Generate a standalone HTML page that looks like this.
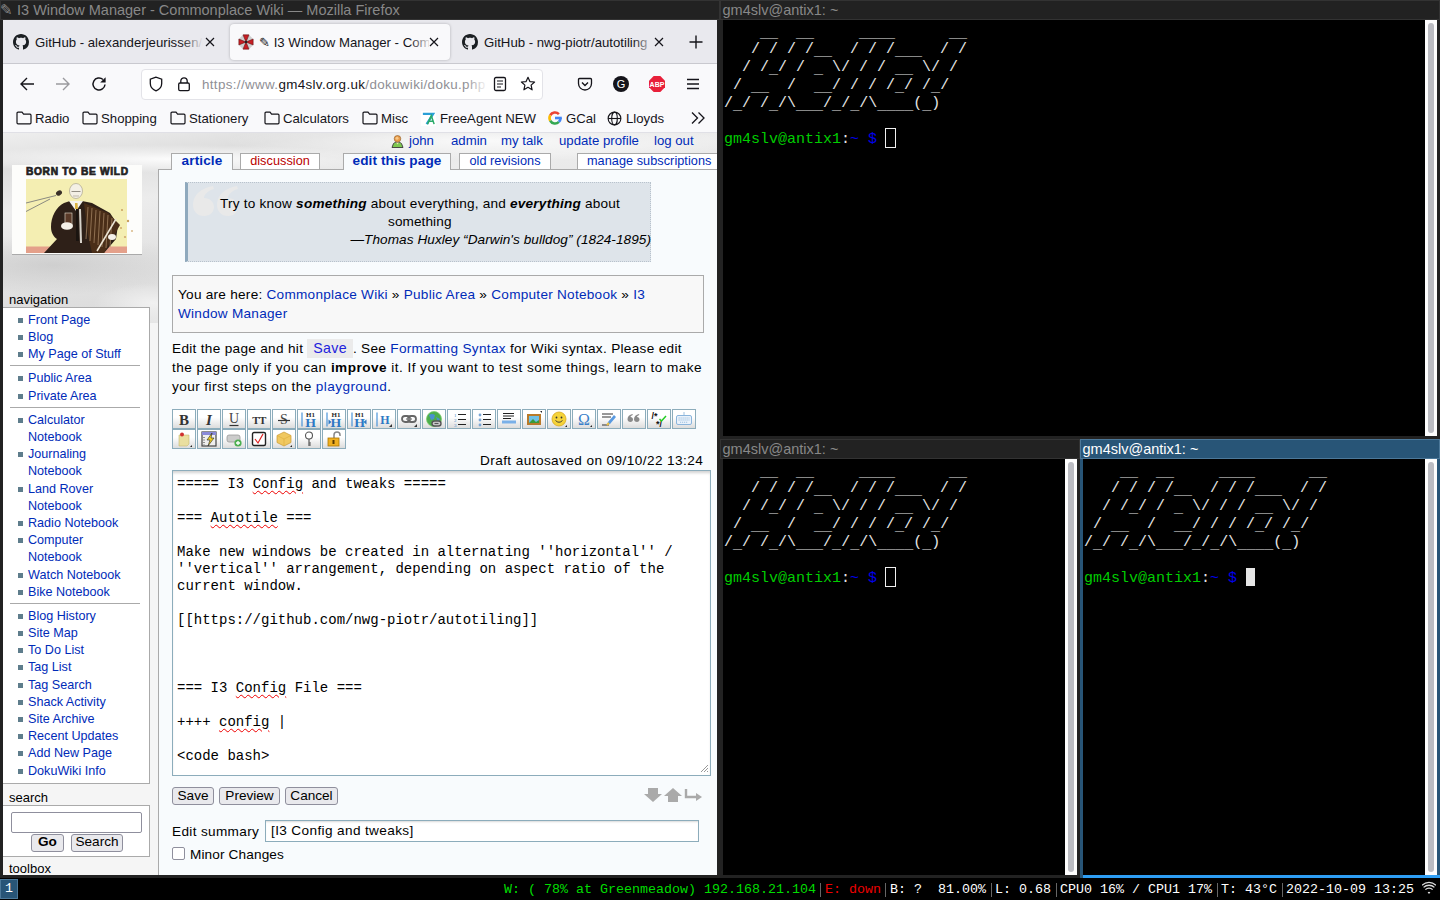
<!DOCTYPE html>
<html><head><meta charset="utf-8">
<style>
*{margin:0;padding:0;box-sizing:border-box}
html,body{width:1440px;height:900px;overflow:hidden;background:#000;position:relative;font-family:"Liberation Sans",sans-serif}
.a{position:absolute}
.mono{font-family:"Liberation Mono",monospace}
.tt{position:absolute;height:20px;background:#222;border:1px solid #333;color:#888;font-size:14.5px;line-height:18px;white-space:nowrap;overflow:hidden;padding-left:0}
.tt.f{background:#285577;border-color:#4c7899;color:#fff}
.term{position:absolute;background:#000;overflow:hidden}
.art{position:absolute;font-family:"Liberation Mono",monospace;font-size:15px;line-height:18px;white-space:pre;color:#e6e6e6}
.art u{text-decoration:none;position:relative;top:2px}
.g{color:#00cd00}.bl{color:#0000ee}.wh{color:#e6e6e6}
.sb{position:absolute;background:#fdfdfd;width:12px}
.sb i{position:absolute;left:3px;width:6px;background:#bbbcc2;border-radius:3px}
.stat{position:absolute;top:879px;height:22px;font-family:"Liberation Mono",monospace;font-size:13.33px;line-height:22px;white-space:pre;color:#fff}
</style></head><body>

<!-- i3 frames -->
<div class="tt" style="left:0;top:0;width:720px;padding-left:0;text-indent:-1px">✎ I3 Window Manager - Commonplace Wiki — Mozilla Firefox</div>
<div class="a" style="left:0;top:20px;width:720px;height:858px;background:#222"></div>
<div class="tt" style="left:720px;top:0;width:720px;padding-left:1.5px">gm4slv@antix1: ~</div>
<div class="a" style="left:720px;top:20px;width:720px;height:419px;background:#222"></div>
<div class="tt" style="left:720px;top:439px;width:360px;padding-left:1.5px">gm4slv@antix1: ~</div>
<div class="a" style="left:720px;top:459px;width:360px;height:419px;background:#222"></div>
<div class="tt f" style="left:1080px;top:439px;width:360px;padding-left:1.5px">gm4slv@antix1: ~</div>
<div class="a" style="left:1080px;top:459px;width:360px;height:419px;background:#285577"></div>
<div class="a" style="left:1083px;top:875px;width:357px;height:3px;background:#2e9ef4"></div>

<!-- terminals -->
<div class="term" style="left:723px;top:20px;width:714px;height:416px">
<div class="art" style="left:1px;top:3px">    <u>__</u>  <u>__</u>     <u>____</u>      <u>__</u>
   / / / /<u>__</u>  / / /<u>___</u>  / /
  / /<u>_</u>/ / <u>_</u> \/ / / <u>__</u> \/ /
 / <u>__</u>  /  <u>__</u>/ / / /<u>_</u>/ /<u>_</u>/
/<u>_</u>/ /<u>_</u>/\<u>___</u>/<u>_</u>/<u>_</u>/\<u>____</u>(<u>_</u>)

<span class="g">gm4slv@antix1</span>:<span class="bl">~ $</span> </div>
<div class="a" style="left:162px;top:108px;width:11px;height:20px;border:1px solid #f0f0f0"></div>
<div class="sb" style="left:702px;top:0;height:416px"><i style="top:3px;bottom:3px"></i></div>
</div>

<div class="term" style="left:723px;top:459px;width:354px;height:416px">
<div class="art" style="left:1px;top:3px">    <u>__</u>  <u>__</u>     <u>____</u>      <u>__</u>
   / / / /<u>__</u>  / / /<u>___</u>  / /
  / /<u>_</u>/ / <u>_</u> \/ / / <u>__</u> \/ /
 / <u>__</u>  /  <u>__</u>/ / / /<u>_</u>/ /<u>_</u>/
/<u>_</u>/ /<u>_</u>/\<u>___</u>/<u>_</u>/<u>_</u>/\<u>____</u>(<u>_</u>)

<span class="g">gm4slv@antix1</span>:<span class="bl">~ $</span> </div>
<div class="a" style="left:162px;top:108px;width:11px;height:20px;border:1px solid #f0f0f0"></div>
<div class="sb" style="left:342px;top:0;height:416px"><i style="top:3px;bottom:3px"></i></div>
</div>

<div class="term" style="left:1083px;top:459px;width:354px;height:416px">
<div class="art" style="left:1px;top:3px">    <u>__</u>  <u>__</u>     <u>____</u>      <u>__</u>
   / / / /<u>__</u>  / / /<u>___</u>  / /
  / /<u>_</u>/ / <u>_</u> \/ / / <u>__</u> \/ /
 / <u>__</u>  /  <u>__</u>/ / / /<u>_</u>/ /<u>_</u>/
/<u>_</u>/ /<u>_</u>/\<u>___</u>/<u>_</u>/<u>_</u>/\<u>____</u>(<u>_</u>)

<span class="g">gm4slv@antix1</span>:<span class="bl">~ $</span> </div>
<div class="a" style="left:163px;top:109px;width:9px;height:18px;background:#e6e6e6"></div>
<div class="sb" style="left:342px;top:0;height:416px"><i style="top:3px;bottom:3px"></i></div>
</div>

<!-- i3bar -->
<div class="a" style="left:0;top:878px;width:1440px;height:22px;background:#000"></div>
<div class="a mono" style="left:0;top:879px;width:18px;height:20px;background:#285577;border:1px solid #4c7899;color:#fff;font-size:13.33px;line-height:18px;text-align:center">1</div>

<!-- STATUS -->
<div class="stat" style="left:504px;color:#00dd00">W: ( 78% at Greenmeadow) 192.168.21.104</div>
<div class="stat" style="left:825px;color:#ee0000">E: down</div>
<div class="stat" style="left:890px">B: ?  81.00%</div>
<div class="stat" style="left:995px">L: 0.68</div>
<div class="stat" style="left:1060px">CPU0 16% / CPU1 17%</div>
<div class="stat" style="left:1221px">T: 43°C</div>
<div class="stat" style="left:1286px">2022-10-09 13:25</div>
<div class="a" style="left:820px;top:883px;width:1px;height:14px;background:#666"></div>
<div class="a" style="left:885px;top:883px;width:1px;height:14px;background:#666"></div>
<div class="a" style="left:991px;top:883px;width:1px;height:14px;background:#666"></div>
<div class="a" style="left:1056px;top:883px;width:1px;height:14px;background:#666"></div>
<div class="a" style="left:1217px;top:883px;width:1px;height:14px;background:#666"></div>
<div class="a" style="left:1282px;top:883px;width:1px;height:14px;background:#666"></div>
<svg class="a" style="left:1422px;top:881px" width="14" height="14" viewBox="0 0 14 14"><path d="M7 13L5.6 11.3A2.2 2.2 0 0 1 8.4 11.3Z" fill="#ddd"/><path d="M3.4 8.6A5 5 0 0 1 10.6 8.6M1.6 6.4A7.8 7.8 0 0 1 12.4 6.4M0 4.3A10 10 0 0 1 14 4.3" stroke="#ddd" stroke-width="1.3" fill="none"/></svg>
<!-- /STATUS -->
<!-- FIREFOX -->
<div id="ff" class="a" style="left:0;top:0;width:717px;height:875px;clip-path:inset(20px 0 0 3px)">
<!-- tabstrip -->
<div class="a" style="left:3px;top:20px;width:714px;height:43px;background:#e9e9ee"></div>
<div class="a" style="left:3px;top:63px;width:714px;height:1px;background:#c9c9cf"></div>
<div class="a" style="left:3px;top:64px;width:714px;height:69px;background:#f9f9fb"></div>
<div class="a" style="left:3px;top:132px;width:714px;height:1px;background:#e0e0e6"></div>
<style>
.tab{position:absolute;top:25px;height:36px;font-size:13.2px;line-height:36px;color:#15141a;white-space:nowrap}
.tabtxt{position:absolute;top:0;overflow:hidden;height:36px}
.fade{position:absolute;top:0;width:22px;height:36px}
.x{position:absolute;top:12px;width:12px;height:12px}
.bm{position:absolute;top:108px;height:22px;font-size:13.2px;line-height:22px;color:#15141a;white-space:nowrap}
.ico{position:absolute}
</style>
<!-- tab 1 -->
<svg class="ico" style="left:13px;top:34px" width="16" height="16" viewBox="0 0 16 16"><path fill="#1b1f23" d="M8 0C3.58 0 0 3.58 0 8c0 3.54 2.29 6.53 5.47 7.59.4.07.55-.17.55-.38 0-.19-.01-.82-.01-1.49-2.01.37-2.53-.49-2.69-.94-.09-.23-.48-.94-.82-1.13-.28-.15-.68-.52-.01-.53.63-.01 1.080.58 1.23.82.72 1.21 1.87.87 2.33.66.07-.52.28-.87.51-1.07-1.780-.2-3.64-.89-3.64-3.95 0-.87.31-1.59.82-2.15-.08-.2-.36-1.02.08-2.12 0 0 .67-.21 2.2.82.64-.18 1.32-.27 2-.27.68 0 1.36.09 2 .27 1.53-1.04 2.2-.82 2.2-.82.44 1.1.16 1.92.08 2.12.51.56.82 1.27.82 2.15 0 3.07-1.87 3.75-3.65 3.95.29.25.54.73.54 1.48 0 1.07-.01 1.93-.01 2.2 0 .21.15.46.55.38A8.013 8.013 0 0016 8c0-4.42-3.58-8-8-8z"/></svg>
<div class="tab" style="left:35px;width:168px;overflow:hidden">GitHub - alexanderjeurissen/dotfiles</div>
<div class="fade" style="left:181px;top:24px;background:linear-gradient(90deg,rgba(233,233,238,0),#e9e9ee)"></div>
<svg class="x" style="left:204px;top:36px" viewBox="0 0 12 12"><path d="M2 2L10 10M10 2L2 10" stroke="#15141a" stroke-width="1.2"/></svg>
<!-- tab 2 active -->
<div class="a" style="left:230px;top:24px;width:220px;height:36px;background:#f9f9fb;border-radius:4px;box-shadow:0 0 3px rgba(0,0,0,.25)"></div>
<svg class="ico" style="left:238px;top:34px" width="16" height="16" viewBox="-8.5 -8.5 17 17"><path d="M0 0L-7.58 -3.14L-3.14 -7.58Z" fill="#cfcfcf"/><path d="M0 0L-3.14 7.58L-7.58 3.14Z" fill="#cfcfcf"/><path d="M0 0L7.58 3.14L3.14 7.58Z" fill="#cfcfcf"/><path d="M0 0L3.14 -7.58L7.58 -3.14Z" fill="#cfcfcf"/><path d="M0 0L-3.14 -7.58L3.14 -7.58Z" fill="#c81e24" stroke="#5a0a0a" stroke-width="0.6" stroke-linejoin="round"/><path d="M0 0L7.58 -3.14L7.58 3.14Z" fill="#c81e24" stroke="#5a0a0a" stroke-width="0.6" stroke-linejoin="round"/><path d="M0 0L3.14 7.58L-3.14 7.58Z" fill="#c81e24" stroke="#5a0a0a" stroke-width="0.6" stroke-linejoin="round"/><path d="M0 0L-7.58 3.14L-7.58 -3.14Z" fill="#c81e24" stroke="#5a0a0a" stroke-width="0.6" stroke-linejoin="round"/><circle r="1.4" fill="#222"/></svg>
<div class="tab" style="left:259px;width:170px;overflow:hidden;color:#15141a">✎ I3 Window Manager - Commonplace</div>
<div class="fade" style="left:410px;top:24px;background:linear-gradient(90deg,rgba(249,249,251,0),#f9f9fb)"></div>
<svg class="x" style="left:428px;top:36px" viewBox="0 0 12 12"><path d="M2 2L10 10M10 2L2 10" stroke="#15141a" stroke-width="1.2"/></svg>
<!-- tab 3 -->
<svg class="ico" style="left:462px;top:34px" width="16" height="16" viewBox="0 0 16 16"><path fill="#1b1f23" d="M8 0C3.58 0 0 3.58 0 8c0 3.54 2.29 6.53 5.47 7.59.4.07.55-.17.55-.38 0-.19-.01-.82-.01-1.49-2.01.37-2.53-.49-2.69-.94-.09-.23-.48-.94-.82-1.13-.28-.15-.68-.52-.01-.53.63-.01 1.08.58 1.23.82.72 1.21 1.87.87 2.330.66.07-.52.28-.87.51-1.07-1.78-.2-3.64-.89-3.64-3.95 0-.87.31-1.59.82-2.15-.08-.2-.36-1.02.08-2.12 0 0 .67-.21 2.2.82.64-.18 1.32-.27 2-.27.68 0 1.36.09 2 .27 1.53-1.04 2.2-.82 2.2-.82.44 1.1.16 1.92.08 2.12.51.56.82 1.27.82 2.15 0 3.07-1.87 3.75-3.65 3.95.29.25.54.73.54 1.48 0 1.07-.01 1.93-.01 2.2 0 .21.15.46.55.38A8.013 8.013 0 0016 8c0-4.42-3.58-8-8-8z"/></svg>
<div class="tab" style="left:484px;width:170px;overflow:hidden">GitHub - nwg-piotr/autotiling</div>
<div class="fade" style="left:633px;top:24px;background:linear-gradient(90deg,rgba(233,233,238,0),#e9e9ee)"></div>
<svg class="x" style="left:653px;top:36px" viewBox="0 0 12 12"><path d="M2 2L10 10M10 2L2 10" stroke="#15141a" stroke-width="1.2"/></svg>
<svg class="ico" style="left:688px;top:34px" width="16" height="16" viewBox="0 0 16 16"><path d="M8 1.5V14.5M1.5 8H14.5" stroke="#15141a" stroke-width="1.4"/></svg>

<!-- nav bar -->
<svg class="ico" style="left:19px;top:76px" width="16" height="16" viewBox="0 0 16 16"><path d="M15 8H2M8 2L2 8L8 14" stroke="#15141a" stroke-width="1.4" fill="none"/></svg>
<svg class="ico" style="left:55px;top:76px" width="16" height="16" viewBox="0 0 16 16"><path d="M1 8H14M8 2L14 8L8 14" stroke="#9a9a9e" stroke-width="1.4" fill="none"/></svg>
<svg class="ico" style="left:91px;top:76px" width="16" height="16" viewBox="0 0 16 16"><path d="M14 8.5A6 6 0 1 1 12 3.5" stroke="#15141a" stroke-width="1.5" fill="none"/><path d="M14.6 1.2V6.6H9.2Z" fill="#15141a"/></svg>
<div class="a" style="left:141px;top:69px;width:402px;height:31px;background:#fff;border:1px solid #e3e3e8;border-radius:4px"></div>
<svg class="ico" style="left:148px;top:76px" width="16" height="16" viewBox="0 0 16 16"><path d="M8 1.2L2.3 3.2V7.5C2.3 11 4.8 13.6 8 14.8C11.2 13.6 13.7 11 13.7 7.5V3.2Z" stroke="#15141a" stroke-width="1.3" fill="none"/></svg>
<svg class="ico" style="left:176px;top:76px" width="16" height="16" viewBox="0 0 16 16"><rect x="2.7" y="7" width="10.6" height="7.6" rx="1.3" stroke="#15141a" stroke-width="1.3" fill="none"/><path d="M4.8 7V5A3.2 3.2 0 0 1 11.2 5V7" stroke="#15141a" stroke-width="1.3" fill="none"/></svg>
<div class="a" style="left:202px;top:69px;width:284px;height:31px;font-size:13.4px;line-height:31px;color:#8f8f95;white-space:nowrap;overflow:hidden;letter-spacing:0.35px">https://www.<span style="color:#15141a">gm4slv.org.uk</span>/dokuwiki/doku.php?id=</div>
<div class="fade" style="left:466px;top:70px;height:29px;background:linear-gradient(90deg,rgba(255,255,255,0),#fff)"></div>
<svg class="ico" style="left:492px;top:76px" width="16" height="16" viewBox="0 0 16 16"><rect x="2.5" y="1.5" width="11" height="13" rx="1.5" stroke="#15141a" stroke-width="1.3" fill="none"/><path d="M5 5H11M5 8H11M5 11H9" stroke="#15141a" stroke-width="1.2"/></svg>
<svg class="ico" style="left:520px;top:76px" width="16" height="16" viewBox="0 0 16 16"><path d="M8 1.3L9.9 5.6L14.6 6L11.1 9.1L12.1 13.8L8 11.3L3.9 13.8L4.9 9.1L1.4 6L6.1 5.6Z" stroke="#15141a" stroke-width="1.2" fill="none" stroke-linejoin="round"/></svg>
<svg class="ico" style="left:577px;top:76px" width="16" height="16" viewBox="0 0 16 16"><path d="M2.5 2.5H13.5A1 1 0 0 1 14.5 3.5V7.5A6.5 6.5 0 0 1 1.5 7.5V3.5A1 1 0 0 1 2.5 2.5Z" stroke="#15141a" stroke-width="1.3" fill="none"/><path d="M5 6.5L8 9.5L11 6.5" stroke="#15141a" stroke-width="1.4" fill="none"/></svg>
<svg class="ico" style="left:613px;top:76px" width="16" height="16" viewBox="0 0 16 16"><circle cx="8" cy="8" r="8" fill="#15141a"/><text x="8" y="12.2" text-anchor="middle" font-family="Liberation Sans" font-size="11" fill="#fff">G</text></svg>
<svg class="ico" style="left:649px;top:76px" width="16" height="16" viewBox="0 0 16 16"><path d="M4.7 0H11.3L16 4.7V11.3L11.3 16H4.7L0 11.3V4.7Z" fill="#e8203a"/><text x="8" y="11" text-anchor="middle" font-family="Liberation Sans" font-weight="bold" font-size="7" fill="#fff">ABP</text></svg>
<svg class="ico" style="left:685px;top:76px" width="16" height="16" viewBox="0 0 16 16"><path d="M2 3.5H14M2 8H14M2 12.5H14" stroke="#15141a" stroke-width="1.4"/></svg>

<!-- bookmarks -->
<svg class="ico" style="left:16px;top:110px" width="16" height="16" viewBox="0 0 16 16"><path d="M1 3.2A1 1 0 0 1 2 2.2H6L7.6 4.2H14A1 1 0 0 1 15 5.2V12.8A1 1 0 0 1 14 13.8H2A1 1 0 0 1 1 12.8Z" stroke="#15141a" stroke-width="1.2" fill="none"/></svg>
<div class="bm" style="left:35px">Radio</div>
<svg class="ico" style="left:82px;top:110px" width="16" height="16" viewBox="0 0 16 16"><path d="M1 3.2A1 1 0 0 1 2 2.2H6L7.6 4.2H14A1 1 0 0 1 15 5.2V12.8A1 1 0 0 1 14 13.8H2A1 1 0 0 1 1 12.8Z" stroke="#15141a" stroke-width="1.2" fill="none"/></svg>
<div class="bm" style="left:101px">Shopping</div>
<svg class="ico" style="left:170px;top:110px" width="16" height="16" viewBox="0 0 16 16"><path d="M1 3.2A1 1 0 0 1 2 2.2H6L7.6 4.2H14A1 1 0 0 1 15 5.2V12.8A1 1 0 0 1 14 13.8H2A1 1 0 0 1 1 12.8Z" stroke="#15141a" stroke-width="1.2" fill="none"/></svg>
<div class="bm" style="left:189px">Stationery</div>
<svg class="ico" style="left:264px;top:110px" width="16" height="16" viewBox="0 0 16 16"><path d="M1 3.2A1 1 0 0 1 2 2.2H6L7.6 4.2H14A1 1 0 0 1 15 5.2V12.8A1 1 0 0 1 14 13.8H2A1 1 0 0 1 1 12.8Z" stroke="#15141a" stroke-width="1.2" fill="none"/></svg>
<div class="bm" style="left:283px">Calculators</div>
<svg class="ico" style="left:362px;top:110px" width="16" height="16" viewBox="0 0 16 16"><path d="M1 3.2A1 1 0 0 1 2 2.2H6L7.6 4.2H14A1 1 0 0 1 15 5.2V12.8A1 1 0 0 1 14 13.8H2A1 1 0 0 1 1 12.8Z" stroke="#15141a" stroke-width="1.2" fill="none"/></svg>
<div class="bm" style="left:381px">Misc</div>
<svg class="ico" style="left:421px;top:111px" width="15" height="15" viewBox="0 0 16 16"><rect width="16" height="16" fill="#fff"/><path d="M2 3L13 3L6 14" stroke="#2a9fd6" stroke-width="2.4" fill="none"/><path d="M7 14L11 5L14 14M8.5 11H12.5" stroke="#2aaa6a" stroke-width="1.6" fill="none"/></svg>
<div class="bm" style="left:440px">FreeAgent NEW</div>
<svg class="ico" style="left:547px;top:110px" width="16" height="16" viewBox="0 0 16 16"><path d="M3.24 5.25A5.5 5.5 0 0 1 11.89 4.11" stroke="#ea4335" stroke-width="2.6" fill="none"/><path d="M3.24 10.75A5.5 5.5 0 0 1 3.24 5.25" stroke="#fbbc05" stroke-width="2.6" fill="none"/><path d="M11.89 11.89A5.5 5.5 0 0 1 3.24 10.75" stroke="#34a853" stroke-width="2.6" fill="none"/><path d="M13.5 8A5.5 5.5 0 0 1 11.89 11.89" stroke="#4285f4" stroke-width="2.6" fill="none"/><rect x="8" y="6.7" width="6.8" height="2.6" fill="#4285f4"/></svg>
<div class="bm" style="left:566px">GCal</div>
<svg class="ico" style="left:607px;top:111px" width="15" height="15" viewBox="0 0 16 16"><circle cx="8" cy="8" r="6.8" stroke="#15141a" stroke-width="1.2" fill="none"/><ellipse cx="8" cy="8" rx="3" ry="6.8" stroke="#15141a" stroke-width="1.2" fill="none"/><path d="M1.2 8H14.8" stroke="#15141a" stroke-width="1.2"/></svg>
<div class="bm" style="left:626px">Lloyds</div>
<svg class="ico" style="left:690px;top:111px" width="16" height="14" viewBox="0 0 16 14"><path d="M2 1.5L7.5 7L2 12.5M8.5 1.5L14 7L8.5 12.5" stroke="#15141a" stroke-width="1.3" fill="none"/></svg>

<!-- WIKI -->
<style>
.wk{position:absolute;font-size:13.6px;white-space:nowrap;color:#000;letter-spacing:0.23px}
.lk{color:#002bb8}
.nav{position:absolute;left:28px;font-size:12.6px;line-height:17px;color:#002bb8;white-space:nowrap}
.bul{position:absolute;left:18px;width:5px;height:5px;background:#5e7d8c}
.sep{position:absolute;left:10px;width:130px;height:1px;background:#aaa}
.tb{position:absolute;width:24px;height:20px;border:1px solid #8cacbb;background:linear-gradient(#fff,#fff 40%,#dcdcdc)}
.btn{position:absolute;height:18px;border:1px solid #8f8f9d;border-radius:3px;background:#e9e9ed;font-size:13.6px;line-height:16px;text-align:center;color:#000}
.code{position:absolute;left:177px;top:476px;font-family:"Liberation Mono",monospace;font-size:14px;line-height:17px;white-space:pre;color:#000}
.sq{text-decoration:underline wavy #e00;text-decoration-thickness:1px;text-underline-offset:2px}
</style>
<div class="a" style="left:3px;top:133px;width:714px;height:742px;background:#f5f5f5"></div>
<div class="a" style="left:3px;top:133px;width:714px;height:190px;background:radial-gradient(ellipse 230px 14px at 170px 26px,rgba(255,255,255,.9),rgba(255,255,255,0)),radial-gradient(ellipse 150px 30px at 50px 132px,rgba(190,190,190,.55),rgba(190,190,190,0)),radial-gradient(ellipse 260px 20px at 480px 8px,rgba(255,255,255,.8),rgba(255,255,255,0)),radial-gradient(ellipse 60px 20px at 150px 170px,rgba(255,255,255,.6),rgba(255,255,255,0)),linear-gradient(174deg,#eeeeee 0%,#dedede 14%,#ececec 30%,#e4e4e4 50%,#dddddd 70%,#f0f0f0 86%,#f5f5f5 100%)"></div>
<svg class="a" style="left:391px;top:134px" width="13" height="14" viewBox="0 0 13 14"><path d="M1 13.5L2.5 9.5C3.5 8.5 5 8.2 6.5 8.2C8 8.2 9.5 8.5 10.5 9.5L12 13.5Z" fill="#7ec850" stroke="#3a3a3a" stroke-width="0.9"/><path d="M5.2 8.4L6.5 10.5L7.8 8.4Z" fill="#f0e0c0"/><circle cx="6.5" cy="4.8" r="3.3" fill="#e89a48" stroke="#8a5a2a" stroke-width="0.6"/><circle cx="6" cy="4.2" r="1.5" fill="#f8c888"/></svg>
<div class="wk lk" style="left:409px;top:132px;line-height:18px;letter-spacing:0;font-size:13.2px">john</div>
<div class="wk lk" style="left:451px;top:132px;line-height:18px;letter-spacing:0;font-size:13.2px">admin</div>
<div class="wk lk" style="left:501px;top:132px;line-height:18px;letter-spacing:0;font-size:13.2px">my talk</div>
<div class="wk lk" style="left:559px;top:132px;line-height:18px;letter-spacing:0;font-size:13.2px">update profile</div>
<div class="wk lk" style="left:654px;top:132px;line-height:18px;letter-spacing:0;font-size:13.2px">log out</div>
<div class="a" style="left:158px;top:169px;width:600px;height:720px;background:#f8fbfd;border:1px solid #aaa"></div>
<div class="a" style="left:171px;top:153px;width:62px;height:17px;background:#f8fbfd;border:1px solid #aaa;border-bottom:none;font-size:13.6px;letter-spacing:0.1px;line-height:13px;text-align:center;color:#002bb8;font-weight:bold;white-space:nowrap">article</div>
<div class="a" style="left:240px;top:153px;width:80px;height:17px;background:#fff;border:1px solid #aaa;border-bottom:1px solid #aaa;font-size:12.7px;letter-spacing:0.05px;line-height:15px;text-align:center;color:#ba0000;font-weight:normal;white-space:nowrap">discussion</div>
<div class="a" style="left:343px;top:153px;width:108px;height:17px;background:#f8fbfd;border:1px solid #aaa;border-bottom:none;font-size:13.6px;letter-spacing:0.1px;line-height:13px;text-align:center;color:#002bb8;font-weight:bold;white-space:nowrap">edit this page</div>
<div class="a" style="left:459px;top:153px;width:92px;height:17px;background:#fff;border:1px solid #aaa;border-bottom:1px solid #aaa;font-size:12.7px;letter-spacing:0.05px;line-height:15px;text-align:center;color:#002bb8;font-weight:normal;white-space:nowrap">old revisions</div>
<div class="a" style="left:577px;top:153px;width:147px;height:17px;background:#fff;border:1px solid #aaa;border-bottom:1px solid #aaa;font-size:12.7px;letter-spacing:0.05px;line-height:15px;text-align:left;padding-left:9px;color:#002bb8;font-weight:normal;white-space:nowrap">manage subscriptions</div>
<div class="a" style="left:185px;top:182px;width:466px;height:80px;background:#dee4ea;border:1px dotted #b8c2cc;border-left:3px solid #8fa9bd"></div>
<svg class="a" style="left:193px;top:186px" width="46" height="30" viewBox="0 0 46 30"><path d="M11 30C4 30 0 25 0 19C0 9 8 2 20 0L21 3C14 5 11 9 11 12C17 12 21 16 21 21C21 26 17 30 11 30Z M35 30C28 30 24 25 24 19C24 9 32 2 44 0L45 3C38 5 35 9 35 12C41 12 45 16 45 21C45 26 41 30 35 30Z" fill="#e9e9e9"/></svg>
<div class="wk" style="left:220px;top:195px;line-height:18px;letter-spacing:0.215px">Try to know <b><i>something</i></b> about everything, and <b><i>everything</i></b> about</div>
<div class="wk" style="left:388px;top:213px;line-height:18px;letter-spacing:0.09px">something</div>
<div class="wk" style="right:66px;top:231px;line-height:18px;font-style:italic;letter-spacing:0.056px">—Thomas Huxley “Darwin's bulldog” (1824-1895)</div>
<div class="a" style="left:172px;top:275px;width:532px;height:58px;background:#f8f8f8;border:1px solid #aaa"></div>
<div class="wk" style="left:178px;top:285px;line-height:19px;letter-spacing:0.26px">You are here: <span class="lk">Commonplace Wiki</span> » <span class="lk">Public Area</span> » <span class="lk">Computer Notebook</span> » <span class="lk">I3</span><br><span class="lk">Window Manager</span></div>
<div class="wk" style="left:172px;top:339px;line-height:19px;letter-spacing:0.31px">Edit the page and hit <span style="background:#ebebeb;color:#2222dd;padding:1px 6px 2px;font-size:14.2px">Save</span>. See <span class="lk">Formatting Syntax</span> for Wiki syntax. Please edit</div>
<div class="wk" style="left:172px;top:358px;line-height:19px;letter-spacing:0.46px">the page only if you can <b>improve</b> it. If you want to test some things, learn to make</div>
<div class="wk" style="left:172px;top:377px;line-height:19px;letter-spacing:0.42px">your first steps on the <span class="lk">playground</span>.</div>
<div class="tb" style="left:172px;top:409px"></div>
<div class="tb" style="left:197px;top:409px"></div>
<div class="tb" style="left:222px;top:409px"></div>
<div class="tb" style="left:247px;top:409px"></div>
<div class="tb" style="left:272px;top:409px"></div>
<div class="tb" style="left:297px;top:409px"></div>
<div class="tb" style="left:322px;top:409px"></div>
<div class="tb" style="left:347px;top:409px"></div>
<div class="tb" style="left:372px;top:409px"></div>
<div class="tb" style="left:397px;top:409px"></div>
<div class="tb" style="left:422px;top:409px"></div>
<div class="tb" style="left:447px;top:409px"></div>
<div class="tb" style="left:472px;top:409px"></div>
<div class="tb" style="left:497px;top:409px"></div>
<div class="tb" style="left:522px;top:409px"></div>
<div class="tb" style="left:547px;top:409px"></div>
<div class="tb" style="left:572px;top:409px"></div>
<div class="tb" style="left:597px;top:409px"></div>
<div class="tb" style="left:622px;top:409px"></div>
<div class="tb" style="left:647px;top:409px"></div>
<div class="tb" style="left:672px;top:409px"></div>
<div class="tb" style="left:172px;top:429px"></div>
<div class="tb" style="left:197px;top:429px"></div>
<div class="tb" style="left:222px;top:429px"></div>
<div class="tb" style="left:247px;top:429px"></div>
<div class="tb" style="left:272px;top:429px"></div>
<div class="tb" style="left:297px;top:429px"></div>
<div class="tb" style="left:322px;top:429px"></div>
<svg class="a" style="left:176px;top:411px" width="16" height="16" viewBox="0 0 16 16"><text x='8' y='13.5' text-anchor='middle' font-family='Liberation Serif' font-weight='bold' font-size='15' fill='#333'>B</text></svg>
<svg class="a" style="left:201px;top:411px" width="16" height="16" viewBox="0 0 16 16"><text x='8' y='13.5' text-anchor='middle' font-family='Liberation Serif' font-style='italic' font-weight='bold' font-size='15' fill='#333'>I</text></svg>
<svg class="a" style="left:226px;top:411px" width="16" height="16" viewBox="0 0 16 16"><text x='8' y='12' text-anchor='middle' font-family='Liberation Serif' font-size='14' fill='#444'>U</text><path d='M3.5 14.5H12.5' stroke='#333' stroke-width='1.2'/></svg>
<svg class="a" style="left:251px;top:411px" width="16" height="16" viewBox="0 0 16 16"><text x='8' y='12.5' text-anchor='middle' font-family='Liberation Serif' font-weight='bold' font-size='11' fill='#333' letter-spacing='-0.5'>TT</text></svg>
<svg class="a" style="left:276px;top:411px" width="16" height="16" viewBox="0 0 16 16"><text x='8' y='13' text-anchor='middle' font-family='Liberation Serif' font-size='14' fill='#444'>S</text><path d='M2 9.5H14' stroke='#333' stroke-width='1.2'/></svg>
<svg class="a" style="left:301px;top:411px" width="16" height="16" viewBox="0 0 16 16"><path d='M1 1.5V15.5' stroke='#3a8ad6' stroke-width='1.1'/><text x='9.5' y='15.6' text-anchor='middle' font-family='Liberation Serif' font-weight='bold' font-size='12' fill='#2e78c4' transform='scale(1.15 1) translate(-1.2391304347826089 0)'>H</text><text x='9.5' y='5.6' text-anchor='middle' font-family='Liberation Serif' font-weight='bold' font-size='7' fill='#2a2a2a'>H1</text></svg>
<svg class="a" style="left:326px;top:411px" width="16" height="16" viewBox="0 0 16 16"><path d='M1 1.5V15.5' stroke='#3a8ad6' stroke-width='1.1'/><text x='10' y='15.6' text-anchor='middle' font-family='Liberation Serif' font-weight='bold' font-size='12' fill='#2e78c4' transform='scale(1.15 1) translate(-1.3043478260869565 0)'>H</text><text x='10' y='5.6' text-anchor='middle' font-family='Liberation Serif' font-weight='bold' font-size='7' fill='#2a2a2a'>H1</text><path d='M2.5 8.5L5.5 11L2.5 13.5Z' fill='#2e78c4'/></svg>
<svg class="a" style="left:351px;top:411px" width="16" height="16" viewBox="0 0 16 16"><path d='M1 1.5V15.5' stroke='#3a8ad6' stroke-width='1.1'/><text x='8.5' y='15.6' text-anchor='middle' font-family='Liberation Serif' font-weight='bold' font-size='12' fill='#2e78c4' transform='scale(1.15 1) translate(-1.108695652173913 0)'>H</text><text x='8.5' y='5.6' text-anchor='middle' font-family='Liberation Serif' font-weight='bold' font-size='7' fill='#2a2a2a'>H1</text><path d='M15.5 8.5L12.5 11L15.5 13.5Z' fill='#2e78c4'/></svg>
<svg class="a" style="left:376px;top:411px" width="16" height="16" viewBox="0 0 16 16"><path d='M1 1.5V15.5' stroke='#3a8ad6' stroke-width='1.1'/><text x='9' y='13' text-anchor='middle' font-family='Liberation Serif' font-weight='bold' font-size='12' fill='#2e78c4'>H</text><path d='M16 13L13 16H16Z' fill='#333'/></svg>
<svg class="a" style="left:401px;top:411px" width="16" height="16" viewBox="0 0 16 16"><rect x='1' y='5' width='8' height='6' rx='3' stroke='#666' stroke-width='1.8' fill='none'/><rect x='7' y='5' width='8' height='6' rx='3' stroke='#666' stroke-width='1.8' fill='none'/><path d='M5 8H11' stroke='#888' stroke-width='1.4'/><path d='M16 13L13 16H16Z' fill='#333'/></svg>
<svg class="a" style="left:426px;top:411px" width="16" height="16" viewBox="0 0 16 16"><circle cx='8' cy='8' r='7.5' fill='#4cae4c'/><path d='M3 4Q6 2 9 4L8 8L5 9Z M10 6L14 8L12 11Z' fill='#4a90d0'/><circle cx='8' cy='8' r='7.5' fill='none' stroke='#7ccc6c' stroke-width='0.8'/><rect x='6' y='10' width='9' height='5' rx='2.5' stroke='#555' stroke-width='1.4' fill='#ccc'/><path d='M8.5 12.5H12.5' stroke='#555' stroke-width='1.2'/></svg>
<svg class="a" style="left:451px;top:411px" width="16" height="16" viewBox="0 0 16 16"><text x='3' y='6' font-family='Liberation Serif' font-size='5' fill='#4a8ac8'>1</text><text x='3' y='11' font-family='Liberation Serif' font-size='5' fill='#4a8ac8'>2</text><text x='3' y='16' font-family='Liberation Serif' font-size='5' fill='#4a8ac8'>3</text><path d='M7 3.5H15M7 8.5H15M7 13.5H15' stroke='#222' stroke-width='1'/></svg>
<svg class="a" style="left:476px;top:411px" width="16" height="16" viewBox="0 0 16 16"><circle cx='4' cy='4' r='1.4' fill='#7aa6d6'/><circle cx='4' cy='9' r='1.4' fill='#7aa6d6'/><circle cx='4' cy='14' r='1.4' fill='#7aa6d6'/><path d='M7 3.5H15M7 8.5H15M7 13.5H15' stroke='#222' stroke-width='1'/></svg>
<svg class="a" style="left:501px;top:411px" width="16" height="16" viewBox="0 0 16 16"><path d='M2 2.5H13M2 5H13M2 7.5H10' stroke='#222' stroke-width='1'/><rect x='1' y='9.5' width='14' height='3' fill='#7ab0e8'/></svg>
<svg class="a" style="left:526px;top:411px" width="16" height="16" viewBox="0 0 16 16"><rect x='1' y='3' width='14' height='11' fill='#b87a2a'/><rect x='3' y='5' width='10' height='7' fill='#6cc0e8'/><path d='M3 12L7 8L10 11L13 9V12Z' fill='#3a9a3a'/><path d='M14 0L16 2V0Z' fill='#222'/></svg>
<svg class="a" style="left:551px;top:411px" width="16" height="16" viewBox="0 0 16 16"><circle cx='8' cy='8' r='7' fill='#f5d33a' stroke='#d9a820' stroke-width='0.8'/><circle cx='5.5' cy='6.5' r='0.9' fill='#333'/><circle cx='10.5' cy='6.5' r='0.9' fill='#333'/><path d='M4.5 9.5Q8 13 11.5 9.5' stroke='#333' stroke-width='0.9' fill='none'/><path d='M16 14L14 16H16Z' fill='#222'/></svg>
<svg class="a" style="left:576px;top:411px" width="16" height="16" viewBox="0 0 16 16"><text x='8' y='14' text-anchor='middle' font-family='Liberation Serif' font-size='16' fill='#3a7ec8'>Ω</text><path d='M16 14L14 16H16Z' fill='#222'/></svg>
<svg class="a" style="left:601px;top:411px" width="16" height="16" viewBox="0 0 16 16"><path d='M1 3H12M1 6H10M1 14H8' stroke='#333' stroke-width='1.1'/><path d='M13 4L15 6L9 13L6 14L7 11Z' fill='#5a9ae0'/><path d='M6 14L8 12' stroke='#f0c040' stroke-width='2'/></svg>
<svg class="a" style="left:626px;top:411px" width="16" height="16" viewBox="0 0 16 16"><path d='M4.5 11C2.6 11 1.5 9.8 1.5 8.2C1.5 5.6 3.5 3.6 6.5 3L6.8 3.9C5.2 4.4 4.5 5.3 4.5 6C6 6 7 7 7 8.5C7 9.9 6 11 4.5 11Z M11 11C9.1 11 8 9.8 8 8.2C8 5.6 10 3.6 13 3L13.3 3.9C11.7 4.4 11 5.3 11 6C12.5 6 13.5 7 13.5 8.5C13.5 9.9 12.5 11 11 11Z' fill='#8a8a8a'/></svg>
<svg class="a" style="left:651px;top:411px" width="16" height="16" viewBox="0 0 16 16"><text x='0.5' y='7.5' font-family='Liberation Sans' font-weight='bold' font-size='9' fill='#111'>/*</text><text x='5' y='15.5' font-family='Liberation Sans' font-weight='bold' font-size='9' fill='#111'>*/</text><path d='M8.5 8L10.5 10L15 5' stroke='#2c2' stroke-width='1.5' fill='none'/></svg>
<svg class="a" style="left:676px;top:411px" width="16" height="16" viewBox="0 0 16 16"><path d='M8 1V4' stroke='#9cc0e0' stroke-width='1'/><rect x='0.5' y='4.5' width='15' height='9' rx='1.5' stroke='#8ab4dc' stroke-width='1' fill='#eaf2fb'/><path d='M2.5 7H13.5M2.5 9H13.5M4 11.2H12' stroke='#9cc0e0' stroke-width='1.1' stroke-dasharray='1.2 0.8'/></svg>
<svg class="a" style="left:176px;top:431px" width="16" height="16" viewBox="0 0 16 16"><path d='M3 4H13V13L11 15H3Z' fill='#eadfa0' stroke='#c8b870' stroke-width='0.6'/><circle cx='6' cy='3.5' r='2' fill='#d03030'/><path d='M16 14L14 16H16Z' fill='#222'/></svg>
<svg class="a" style="left:201px;top:431px" width="16" height="16" viewBox="0 0 16 16"><rect x='1' y='1' width='14' height='14' fill='#eee' stroke='#444' stroke-width='1.2'/><rect x='1' y='1' width='14' height='3' fill='#8a8ad8'/><path d='M3 6V14' stroke='#333' stroke-width='1' stroke-dasharray='1 1.5'/><path d='M11 2L6 9H9L7 15L13 7H10Z' fill='#f0d020' stroke='#222' stroke-width='0.6'/></svg>
<svg class="a" style="left:226px;top:431px" width="16" height="16" viewBox="0 0 16 16"><rect x='1' y='4' width='13' height='7' rx='2' fill='#ccc' stroke='#999' stroke-width='0.8'/><circle cx='12' cy='12' r='3.6' fill='#4caf50'/><path d='M12 10V14M10 12H14' stroke='#fff' stroke-width='1.3'/></svg>
<svg class="a" style="left:251px;top:431px" width="16" height="16" viewBox="0 0 16 16"><rect x='1.5' y='1.5' width='13' height='13' rx='1.5' fill='#fff' stroke='#222' stroke-width='1.4'/><path d='M4 8L7 12L12 3' stroke='#e02020' stroke-width='1.2' fill='none'/></svg>
<svg class="a" style="left:276px;top:431px" width="16" height="16" viewBox="0 0 16 16"><path d='M8 1L15 4.5V11.5L8 15L1 11.5V4.5Z' fill='#f0c860' stroke='#c89830' stroke-width='0.7'/><path d='M1 4.5L8 8L15 4.5M8 8V15' stroke='#e0b040' stroke-width='0.7' fill='none'/><path d='M16 14L14 16H16Z' fill='#222'/></svg>
<svg class="a" style="left:301px;top:431px" width="16" height="16" viewBox="0 0 16 16"><circle cx='8' cy='4.5' r='3.5' fill='#fff' stroke='#555' stroke-width='1.1'/><path d='M8 8V15M8 12H10M8 14H10' stroke='#555' stroke-width='1.2'/></svg>
<svg class="a" style="left:326px;top:431px" width="16" height="16" viewBox="0 0 16 16"><path d='M8 7V4A3 3 0 0 1 14 4V5' stroke='#888' stroke-width='1.5' fill='none'/><rect x='2' y='7' width='11' height='8' fill='#f0b020' stroke='#b07800' stroke-width='0.8'/><rect x='6.5' y='9' width='2' height='4' fill='#5a3a00'/></svg>
<div class="wk" style="left:480px;top:452px;line-height:18px;letter-spacing:0.42px">Draft autosaved on 09/10/22 13:24</div>
<div class="a" style="left:172px;top:470px;width:539px;height:306px;background:#fff;border:1px solid #8cacbb;box-shadow:inset 0 3px 3px -1px rgba(0,0,0,.18)"></div>
<div class="code">===== I3 <span class=sq>Config</span> and tweaks =====

=== <span class=sq>Autotile</span> ===

Make new windows be created in alternating ''horizontal'' /
''vertical'' arrangement, depending on aspect ratio of the
current window.

[[https://github.com/nwg-piotr/autotiling]]



=== I3 <span class=sq>Config</span> File ===

++++ <span class=sq>config</span> |

&lt;code bash&gt;</div>
<svg class="a" style="left:699px;top:763px" width="10" height="10" viewBox="0 0 10 10"><path d="M9 2L2 9M9 5L5 9M9 8L8 9" stroke="#999" stroke-width="1"/></svg>
<div class="btn" style="left:172px;top:787px;width:42px">Save</div>
<div class="btn" style="left:219px;top:787px;width:61px">Preview</div>
<div class="btn" style="left:285px;top:787px;width:53px">Cancel</div>
<svg class="a" style="left:644px;top:787px" width="60" height="16" viewBox="0 0 60 16"><path d="M4 1H14V7H18L9 15L0 7H4Z" fill="#aaa"/><path d="M24 15H34V9H38L29 1L20 9H24Z" fill="#aaa"/><path d="M42 2V10H54" stroke="#aaa" stroke-width="2.4" fill="none"/><path d="M52 6L58 10L52 14Z" fill="#aaa"/></svg>
<div class="wk" style="left:172px;top:823px;line-height:18px;letter-spacing:0.34px">Edit summary</div>
<div class="a" style="left:265px;top:820px;width:434px;height:22px;background:#fff;border:1px solid #8cacbb;box-shadow:inset 0 2px 2px -1px rgba(0,0,0,.15);font-size:13.6px;line-height:20px;padding-left:5px;white-space:nowrap;letter-spacing:0.37px">[I3 Config and tweaks]</div>
<div class="a" style="left:172px;top:847px;width:13px;height:13px;background:#fff;border:1px solid #8f8f9d;border-radius:2px"></div>
<div class="wk" style="left:190px;top:846px;line-height:18px;letter-spacing:0.14px">Minor Changes</div>
<svg class="a" style="left:12px;top:165px" width="130" height="90" viewBox="0 0 130 90">
<rect width="130" height="90" fill="#fdfdfb"/>
<rect x="0" y="89" width="130" height="1" fill="#aaa"/>
<text x="14" y="9.9" font-family="Liberation Sans" font-weight="bold" font-size="10.2" fill="#222" textLength="102" lengthAdjust="spacing" stroke="#222" stroke-width="0.7">BORN TO BE WILD</text>
<rect x="14" y="14" width="101" height="74" fill="#f4eeb2"/>
<rect x="14" y="81.5" width="101" height="6.5" fill="#e4a08a"/>
<path d="M14 38L44 30.5M14 46.5L38 34" stroke="#8a8a80" stroke-width="1" fill="none"/>
<ellipse cx="47" cy="28" rx="3.2" ry="2.4" transform="rotate(-35 47 28)" fill="#3a3028"/>
<path d="M52 38C44 42 39 52 39 62C39 68 42 72 45 74L32 88H92L104 74L106 60L98 48L80 38L70 36L58 36Z" fill="#2e2018"/>
<path d="M72 38L96 48L108 60L92 88H80L76 70Z" fill="#4a2e18"/>
<path d="M76 42L74 74M80 43L78 76M84 45L82 78M88 46L86 80M92 48L90 82M96 50L94 83M100 53L98 82" stroke="#a08060" stroke-width="0.8"/>
<path d="M104 54L85 86" stroke="#ece4d4" stroke-width="1.5"/>
<path d="M57 36L64 46L71 36Z" fill="#f4f2ec"/>
<path d="M63 38L65.5 38L66 44L63 44Z" fill="#d8b040"/>
<path d="M64 44L66 44L67 76L64 76Z" fill="#1a1410"/>
<path d="M67 44L69 44L70 78L68 78Z" fill="#d8d4cc"/>
<ellipse cx="64" cy="26" rx="6.5" ry="7.5" fill="#f4f0e6" stroke="#8a8478" stroke-width="0.5"/>
<path d="M59.5 26.5H68.5" stroke="#6a645a" stroke-width="0.7"/>
<path d="M61 31H67" stroke="#9a9080" stroke-width="0.6"/>
<rect x="53" y="48" width="7" height="12" fill="#5a3a28" stroke="#e8e0d0" stroke-width="0.6"/>
<ellipse cx="55" cy="61" rx="6" ry="3.8" fill="#f4f0e8"/>
<ellipse cx="100" cy="72" rx="4" ry="3" fill="#f4f0e8"/>
<circle cx="110" cy="45" r="1" fill="#c8a060"/><circle cx="116" cy="56" r="1.2" fill="#c8a060"/><circle cx="109" cy="63" r="0.9" fill="#c8a060"/><circle cx="120" cy="66" r="1" fill="#d8b888"/><circle cx="113" cy="72" r="1.1" fill="#d0a870"/>
</svg>
<div class="wk" style="left:9px;top:291px;line-height:18px;color:#000;font-size:13px;letter-spacing:0">navigation</div>
<div class="a" style="left:3px;top:307px;width:147px;height:477px;background:#fff;border:1px solid #aaa;border-left:none"></div>
<div class="bul" style="top:318px"></div>
<div class="nav" style="top:312px">Front Page</div>
<div class="bul" style="top:335px"></div>
<div class="nav" style="top:329px">Blog</div>
<div class="bul" style="top:352px"></div>
<div class="nav" style="top:346px">My Page of Stuff</div>
<div class="bul" style="top:376px"></div>
<div class="nav" style="top:370px">Public Area</div>
<div class="bul" style="top:394px"></div>
<div class="nav" style="top:388px">Private Area</div>
<div class="bul" style="top:418px"></div>
<div class="nav" style="top:412px">Calculator</div>
<div class="nav" style="top:429px">Notebook</div>
<div class="bul" style="top:452px"></div>
<div class="nav" style="top:446px">Journaling</div>
<div class="nav" style="top:463px">Notebook</div>
<div class="bul" style="top:487px"></div>
<div class="nav" style="top:481px">Land Rover</div>
<div class="nav" style="top:498px">Notebook</div>
<div class="bul" style="top:521px"></div>
<div class="nav" style="top:515px">Radio Notebook</div>
<div class="bul" style="top:538px"></div>
<div class="nav" style="top:532px">Computer</div>
<div class="nav" style="top:549px">Notebook</div>
<div class="bul" style="top:573px"></div>
<div class="nav" style="top:567px">Watch Notebook</div>
<div class="bul" style="top:590px"></div>
<div class="nav" style="top:584px">Bike Notebook</div>
<div class="bul" style="top:614px"></div>
<div class="nav" style="top:608px">Blog History</div>
<div class="bul" style="top:631px"></div>
<div class="nav" style="top:625px">Site Map</div>
<div class="bul" style="top:648px"></div>
<div class="nav" style="top:642px">To Do List</div>
<div class="bul" style="top:665px"></div>
<div class="nav" style="top:659px">Tag List</div>
<div class="bul" style="top:683px"></div>
<div class="nav" style="top:677px">Tag Search</div>
<div class="bul" style="top:700px"></div>
<div class="nav" style="top:694px">Shack Activity</div>
<div class="bul" style="top:717px"></div>
<div class="nav" style="top:711px">Site Archive</div>
<div class="bul" style="top:734px"></div>
<div class="nav" style="top:728px">Recent Updates</div>
<div class="bul" style="top:751px"></div>
<div class="nav" style="top:745px">Add New Page</div>
<div class="bul" style="top:769px"></div>
<div class="nav" style="top:763px">DokuWiki Info</div>
<div class="sep" style="top:365px"></div>
<div class="sep" style="top:407px"></div>
<div class="sep" style="top:603px"></div>
<div class="wk" style="left:9px;top:789px;line-height:18px;font-size:13px;letter-spacing:0">search</div>
<div class="a" style="left:3px;top:805px;width:147px;height:52px;background:#fff;border:1px solid #aaa;border-left:none"></div>
<div class="a" style="left:11px;top:812px;width:131px;height:21px;background:#fff;border:1px solid #8f8f9d;border-radius:2px"></div>
<div class="btn" style="left:31px;top:834px;width:33px;font-weight:bold;line-height:14px">Go</div>
<div class="btn" style="left:71px;top:834px;width:52px;line-height:14px">Search</div>
<div class="wk" style="left:9px;top:860px;line-height:18px;font-size:13px;letter-spacing:0">toolbox</div>
<!-- /WIKI -->
</div>

</body></html>
